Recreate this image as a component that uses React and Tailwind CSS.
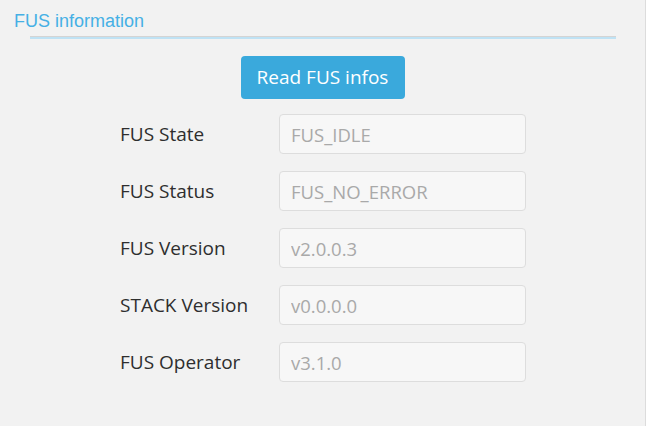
const rows = [
  { label: 'FUS State', value: 'FUS_IDLE' },
  { label: 'FUS Status', value: 'FUS_NO_ERROR' },
  { label: 'FUS Version', value: 'v2.0.0.3' },
  { label: 'STACK Version', value: 'v0.0.0.0' },
  { label: 'FUS Operator', value: 'v3.1.0' },
];

export default function App() {
  return (
    <div className="w-[646px] h-[426px] bg-[#f2f2f2] border-r border-[#dcdcdc] overflow-hidden">
      {/* Section title */}
      <div
        className="pl-[14px] pt-[11px] text-[18px] leading-[20px] text-[#45b0e5]"
        style={{ fontFamily: '"Liberation Sans", Arial, sans-serif' }}
      >
        FUS information
      </div>
      <div className="ml-[30px] w-[586px] mt-[5px]">
        <div className="h-px bg-[#d4d4d4]" />
        <div className="h-[2px] bg-[#bfe2f4]" />
      </div>

      <div style={{ fontFamily: '"Open Sans", "Noto Sans", sans-serif' }}>
        <div className="flex justify-center mt-[17px]">
          <button
            type="button"
            className="w-[164px] h-[43px] rounded-[4px] bg-[#3aa9dc] text-white text-[19px] leading-none"
          >
            Read FUS infos
          </button>
        </div>

        <div className="mt-[15px] flex flex-col gap-[17px]">
          {rows.map((row) => (
            <div key={row.label} className="flex items-center">
              <div className="w-[279px] pl-[120px] text-[19px] font-medium text-[#2e2e2e] whitespace-nowrap">
                {row.label}
              </div>
              <input
                readOnly
                placeholder={row.value}
                className="w-[247px] h-[40px] rounded-[4px] border border-[#dddddd] bg-[#f7f7f7] pl-[11px] text-[18.5px] placeholder:text-[#a9a9a9] outline-none"
              />
            </div>
          ))}
        </div>
      </div>
    </div>
  );
}
